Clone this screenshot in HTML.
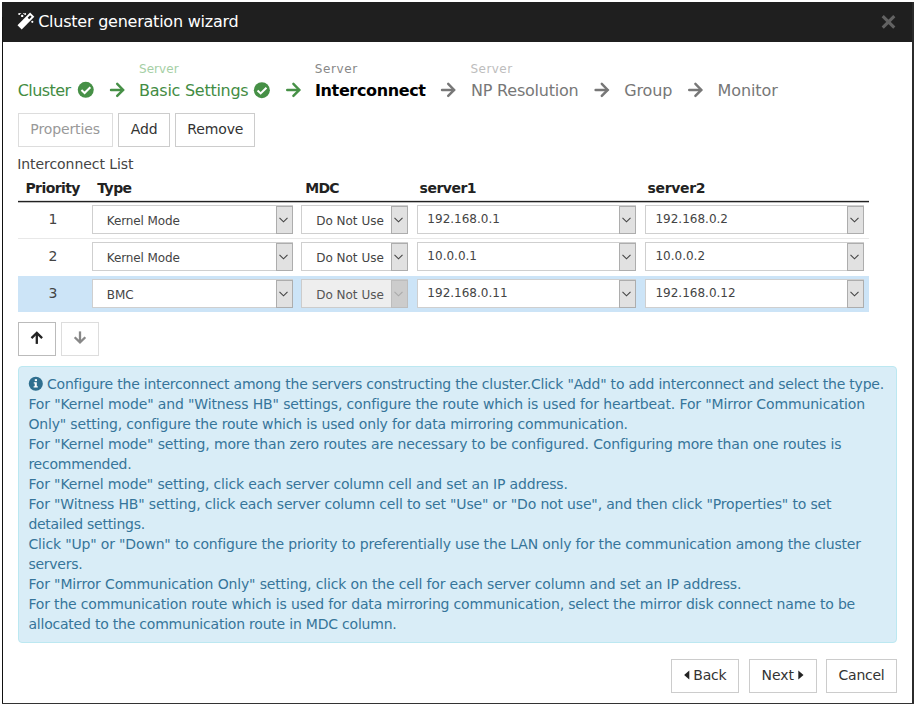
<!DOCTYPE html>
<html><head><meta charset="utf-8"><title>Cluster generation wizard</title>
<style>
*{box-sizing:border-box;margin:0;padding:0}
html,body{width:916px;height:706px;background:#fff;overflow:hidden}
body{position:relative;font-family:"DejaVu Sans","Liberation Sans",sans-serif;color:#333}
.a,.t{position:absolute;display:block}
.t{white-space:pre;line-height:1}
.btn{border:1px solid #ccc;background:#fff;height:34px}
.sel{border:1px solid #cfcfcf;background:#fff;height:29px}
.sel i{position:absolute;right:-1px;top:0;width:17px;height:28px;border:1px solid #adadad;background:#e1e1e1}
.sel.dis{background:#eee;border-color:#ccc}
.sel.dis i{background:#ccc;border-color:#bdbdbd}
svg{position:absolute;display:block;overflow:visible}
</style></head><body>
<div class="a" style="left:2px;top:2px;width:912px;height:40px;background:#1f1f1f"></div>
<div class="a" style="left:2px;top:17px;width:1px;height:687px;background:#111"></div>
<div class="a" style="left:912px;top:2px;width:2px;height:702px;background:#2b2b2b"></div>
<div class="a" style="left:2px;top:703px;width:912px;height:1px;background:#333"></div>
<div class="a" style="left:18px;top:366px;width:879px;height:277px;background:#d9edf7;border:1px solid #bce8f1;border-radius:4px"></div>
<div class="a" style="left:18px;top:276px;width:851px;height:36px;background:#cce4f7"></div>
<div class="a" style="left:18px;top:201px;width:851px;height:1px;background:#222"></div>
<div class="a" style="left:18px;top:202px;width:851px;height:1px;background:#bbb"></div>
<div class="a" style="left:18px;top:200px;width:851px;height:1px;background:#ddd"></div>
<div class="a" style="left:18px;top:238px;width:851px;height:1px;background:#e8e8e8"></div>
<div class="a btn" style="left:18px;top:113px;width:95px;border-color:#ddd"></div>
<div class="a btn" style="left:118px;top:113px;width:52px;border-color:#ccc"></div>
<div class="a btn" style="left:175px;top:113px;width:80px;border-color:#ccc"></div>
<div class="a btn" style="left:18px;top:322px;width:38px;border-color:#bbb"></div>
<div class="a btn" style="left:61px;top:322px;width:38px;border-color:#ddd"></div>
<div class="a btn" style="left:671px;top:659px;width:68px;border-color:#ccc"></div>
<div class="a btn" style="left:749px;top:659px;width:68px;border-color:#ccc"></div>
<div class="a btn" style="left:826px;top:659px;width:71px;border-color:#ccc"></div>
<div class="a sel" style="left:92px;top:205px;width:201px"><i></i><svg style="right:4px;top:10.8px" width="9" height="6" viewBox="0 0 9 6"><path d="M0.5 0.8 4.5 4.8 8.5 0.8" fill="none" stroke="#444" stroke-width="1.1"/></svg></div>
<div class="a sel" style="left:301px;top:205px;width:107px"><i></i><svg style="right:4px;top:10.8px" width="9" height="6" viewBox="0 0 9 6"><path d="M0.5 0.8 4.5 4.8 8.5 0.8" fill="none" stroke="#444" stroke-width="1.1"/></svg></div>
<div class="a sel" style="left:417px;top:205px;width:219px"><i></i><svg style="right:4px;top:10.8px" width="9" height="6" viewBox="0 0 9 6"><path d="M0.5 0.8 4.5 4.8 8.5 0.8" fill="none" stroke="#444" stroke-width="1.1"/></svg></div>
<div class="a sel" style="left:645px;top:205px;width:219px"><i></i><svg style="right:4px;top:10.8px" width="9" height="6" viewBox="0 0 9 6"><path d="M0.5 0.8 4.5 4.8 8.5 0.8" fill="none" stroke="#444" stroke-width="1.1"/></svg></div>
<div class="a sel" style="left:92px;top:242px;width:201px"><i></i><svg style="right:4px;top:10.8px" width="9" height="6" viewBox="0 0 9 6"><path d="M0.5 0.8 4.5 4.8 8.5 0.8" fill="none" stroke="#444" stroke-width="1.1"/></svg></div>
<div class="a sel" style="left:301px;top:242px;width:107px"><i></i><svg style="right:4px;top:10.8px" width="9" height="6" viewBox="0 0 9 6"><path d="M0.5 0.8 4.5 4.8 8.5 0.8" fill="none" stroke="#444" stroke-width="1.1"/></svg></div>
<div class="a sel" style="left:417px;top:242px;width:219px"><i></i><svg style="right:4px;top:10.8px" width="9" height="6" viewBox="0 0 9 6"><path d="M0.5 0.8 4.5 4.8 8.5 0.8" fill="none" stroke="#444" stroke-width="1.1"/></svg></div>
<div class="a sel" style="left:645px;top:242px;width:219px"><i></i><svg style="right:4px;top:10.8px" width="9" height="6" viewBox="0 0 9 6"><path d="M0.5 0.8 4.5 4.8 8.5 0.8" fill="none" stroke="#444" stroke-width="1.1"/></svg></div>
<div class="a sel" style="left:92px;top:279px;width:201px"><i></i><svg style="right:4px;top:10.8px" width="9" height="6" viewBox="0 0 9 6"><path d="M0.5 0.8 4.5 4.8 8.5 0.8" fill="none" stroke="#444" stroke-width="1.1"/></svg></div>
<div class="a sel dis" style="left:301px;top:279px;width:107px"><i></i><svg style="right:4px;top:10.8px" width="9" height="6" viewBox="0 0 9 6"><path d="M0.5 0.8 4.5 4.8 8.5 0.8" fill="none" stroke="#aaa" stroke-width="1.1"/></svg></div>
<div class="a sel" style="left:417px;top:279px;width:219px"><i></i><svg style="right:4px;top:10.8px" width="9" height="6" viewBox="0 0 9 6"><path d="M0.5 0.8 4.5 4.8 8.5 0.8" fill="none" stroke="#444" stroke-width="1.1"/></svg></div>
<div class="a sel" style="left:645px;top:279px;width:219px"><i></i><svg style="right:4px;top:10.8px" width="9" height="6" viewBox="0 0 9 6"><path d="M0.5 0.8 4.5 4.8 8.5 0.8" fill="none" stroke="#444" stroke-width="1.1"/></svg></div>
<span class="t" style="left:38.18px;top:13.66px;font-size:16px;color:#fff;letter-spacing:-0.235px">Cluster generation wizard</span>
<span class="t" style="left:17.78px;top:83.16px;font-size:16px;color:#438c43;letter-spacing:-0.579px">Cluster</span>
<span class="t" style="left:138.96px;top:62.95px;font-size:12px;color:#a5cfa5;letter-spacing:0.076px">Server</span>
<span class="t" style="left:139.08px;top:83.16px;font-size:16px;color:#438c43;letter-spacing:-0.266px">Basic Settings</span>
<span class="t" style="left:314.86px;top:62.95px;font-size:12px;color:#888;letter-spacing:0.596px">Server</span>
<span class="t" style="left:314.98px;top:83.16px;font-size:16px;color:#000;font-weight:700;letter-spacing:-0.360px">Interconnect</span>
<span class="t" style="left:470.56px;top:62.95px;font-size:12px;color:#bdbdbd;letter-spacing:0.436px">Server</span>
<span class="t" style="left:471.08px;top:83.16px;font-size:16px;color:#777;letter-spacing:-0.224px">NP Resolution</span>
<span class="t" style="left:624.18px;top:83.16px;font-size:16px;color:#777;letter-spacing:-0.150px">Group</span>
<span class="t" style="left:717.58px;top:83.16px;font-size:16px;color:#777;letter-spacing:-0.101px">Monitor</span>
<span class="t" style="left:30.32px;top:122.16px;font-size:14px;color:#999;letter-spacing:-0.110px">Properties</span>
<span class="t" style="left:130.72px;top:122.16px;font-size:14px;color:#333;letter-spacing:-0.065px">Add</span>
<span class="t" style="left:187.32px;top:122.16px;font-size:14px;color:#333;letter-spacing:-0.130px">Remove</span>
<span class="t" style="left:17.22px;top:157.06px;font-size:14px;color:#444;letter-spacing:-0.064px">Interconnect List</span>
<span class="t" style="left:25.42px;top:181.36px;font-size:14px;color:#222;font-weight:700;letter-spacing:-0.576px">Priority</span>
<span class="t" style="left:97.22px;top:181.36px;font-size:14px;color:#222;font-weight:700;letter-spacing:-0.550px">Type</span>
<span class="t" style="left:305.22px;top:181.36px;font-size:14px;color:#222;font-weight:700;letter-spacing:-0.774px">MDC</span>
<span class="t" style="left:419.62px;top:181.36px;font-size:14px;color:#222;font-weight:700;letter-spacing:-0.503px">server1</span>
<span class="t" style="left:647.52px;top:181.36px;font-size:14px;color:#222;font-weight:700;letter-spacing:-0.337px">server2</span>
<span class="t" style="left:47.02px;top:376.86px;font-size:14px;color:#36759a;letter-spacing:-0.213px">Configure the interconnect among the servers constructing the cluster.Click "Add" to add interconnect and select the type.</span>
<span class="t" style="left:28.42px;top:396.86px;font-size:14px;color:#36759a;letter-spacing:-0.135px">For "Kernel mode" and "Witness HB" settings, configure the route which is used for heartbeat. For "Mirror Communication</span>
<span class="t" style="left:28.42px;top:416.86px;font-size:14px;color:#36759a;letter-spacing:-0.165px">Only" setting, configure the route which is used only for data mirroring communication.</span>
<span class="t" style="left:28.42px;top:436.86px;font-size:14px;color:#36759a;letter-spacing:-0.138px">For "Kernel mode" setting, more than zero routes are necessary to be configured. Configuring more than one routes is</span>
<span class="t" style="left:28.42px;top:456.86px;font-size:14px;color:#36759a;letter-spacing:-0.242px">recommended.</span>
<span class="t" style="left:28.42px;top:476.86px;font-size:14px;color:#36759a;letter-spacing:-0.154px">For "Kernel mode" setting, click each server column cell and set an IP address.</span>
<span class="t" style="left:28.42px;top:496.86px;font-size:14px;color:#36759a;letter-spacing:-0.168px">For "Witness HB" setting, click each server column cell to set "Use" or "Do not use", and then click "Properties" to set</span>
<span class="t" style="left:28.42px;top:516.86px;font-size:14px;color:#36759a;letter-spacing:-0.288px">detailed settings.</span>
<span class="t" style="left:28.42px;top:536.86px;font-size:14px;color:#36759a;letter-spacing:-0.168px">Click "Up" or "Down" to configure the priority to preferentially use the LAN only for the communication among the cluster</span>
<span class="t" style="left:28.42px;top:556.86px;font-size:14px;color:#36759a;letter-spacing:-0.255px">servers.</span>
<span class="t" style="left:28.42px;top:576.86px;font-size:14px;color:#36759a;letter-spacing:-0.155px">For "Mirror Communication Only" setting, click on the cell for each server column and set an IP address.</span>
<span class="t" style="left:28.42px;top:596.86px;font-size:14px;color:#36759a;letter-spacing:-0.169px">For the communication route which is used for data mirroring communication, select the mirror disk connect name to be</span>
<span class="t" style="left:28.42px;top:616.86px;font-size:14px;color:#36759a;letter-spacing:-0.213px">allocated to the communication route in MDC column.</span>
<span class="t" style="left:693.32px;top:667.96px;font-size:14px;color:#333;letter-spacing:-0.240px">Back</span>
<span class="t" style="left:761.62px;top:667.96px;font-size:14px;color:#333;letter-spacing:-0.082px">Next</span>
<span class="t" style="left:838.62px;top:667.96px;font-size:14px;color:#333;letter-spacing:-0.272px">Cancel</span>
<span class="t" style="left:48.44px;top:212.36px;font-size:14px;color:#444">1</span>
<span class="t" style="left:106.76px;top:215.35px;font-size:12px;color:#444;letter-spacing:-0.108px">Kernel Mode</span>
<span class="t" style="left:316.16px;top:215.35px;font-size:12px;color:#444">Do Not Use</span>
<span class="t" style="left:427.36px;top:213.25px;font-size:12px;color:#444">192.168.0.1</span>
<span class="t" style="left:655.46px;top:213.25px;font-size:12px;color:#444">192.168.0.2</span>
<span class="t" style="left:48.44px;top:249.36px;font-size:14px;color:#444">2</span>
<span class="t" style="left:106.76px;top:252.35px;font-size:12px;color:#444;letter-spacing:-0.108px">Kernel Mode</span>
<span class="t" style="left:316.16px;top:252.35px;font-size:12px;color:#444">Do Not Use</span>
<span class="t" style="left:427.36px;top:250.25px;font-size:12px;color:#444">10.0.0.1</span>
<span class="t" style="left:655.46px;top:250.25px;font-size:12px;color:#444">10.0.0.2</span>
<span class="t" style="left:48.44px;top:286.36px;font-size:14px;color:#444">3</span>
<span class="t" style="left:106.76px;top:289.35px;font-size:12px;color:#444">BMC</span>
<span class="t" style="left:316.16px;top:289.35px;font-size:12px;color:#555">Do Not Use</span>
<span class="t" style="left:427.36px;top:287.25px;font-size:12px;color:#444">192.168.0.11</span>
<span class="t" style="left:655.46px;top:287.25px;font-size:12px;color:#444">192.168.0.12</span>
<svg style="left:0;top:0" width="916" height="706" viewBox="0 0 916 706">
<g transform="translate(25.9,21) rotate(-45)"><rect x="-8.9" y="-3" width="17.8" height="6" fill="#fff"/><rect x="3.6" y="-1.1" width="3.4" height="2.2" fill="#1f1f1f"/></g><g fill="#fff"><circle cx="19.2" cy="14.1" r="1"/><circle cx="22.2" cy="15.9" r="1.2"/><circle cx="25.1" cy="14.1" r="1"/><circle cx="32.3" cy="21.8" r="1.1"/><circle cx="20.7" cy="13.4" r=".5"/><circle cx="23.7" cy="13.4" r=".5"/></g>
<path d="M882.70 16.10L894.30 27.70M894.30 16.10L882.70 27.70" stroke="#626262" stroke-width="3.1" stroke-linecap="butt" fill="none"/>
<circle cx="85.75" cy="89.80" r="8" fill="#469046"/><path d="M81.45 90.10L84.55 93.00L90.35 87.30" fill="none" stroke="#fff" stroke-width="2.05" stroke-linecap="butt" stroke-linejoin="miter"/>
<circle cx="261.85" cy="90.20" r="8" fill="#469046"/><path d="M257.55 90.50L260.65 93.40L266.45 87.70" fill="none" stroke="#fff" stroke-width="2.05" stroke-linecap="butt" stroke-linejoin="miter"/>
<g fill="none" stroke="#469046" stroke-width="2.45" stroke-linecap="round" stroke-linejoin="miter"><path d="M111.02 89.90H122.74"/><path d="M117.20 83.87L123.11 89.90L117.20 95.93"/></g>
<g fill="none" stroke="#469046" stroke-width="2.45" stroke-linecap="round" stroke-linejoin="miter"><path d="M287.23 89.90H298.94"/><path d="M293.40 83.87L299.31 89.90L293.40 95.93"/></g>
<g fill="none" stroke="#777" stroke-width="2.45" stroke-linecap="round" stroke-linejoin="miter"><path d="M442.03 89.90H453.74"/><path d="M448.20 83.87L454.11 89.90L448.20 95.93"/></g>
<g fill="none" stroke="#777" stroke-width="2.45" stroke-linecap="round" stroke-linejoin="miter"><path d="M595.62 89.90H607.34"/><path d="M601.80 83.87L607.71 89.90L601.80 95.93"/></g>
<g fill="none" stroke="#777" stroke-width="2.45" stroke-linecap="round" stroke-linejoin="miter"><path d="M689.23 89.90H700.94"/><path d="M695.40 83.87L701.31 89.90L695.40 95.93"/></g>
<g fill="none" stroke="#222" stroke-width="2.3" stroke-linecap="butt" stroke-linejoin="miter"><path d="M36.80 343.90V333.24"/><path d="M31.49 338.09L36.80 332.89L42.11 338.09"/></g>
<g fill="none" stroke="#888" stroke-width="2.3" stroke-linecap="butt" stroke-linejoin="miter"><path d="M80.00 331.40V342.06"/><path d="M74.69 337.21L80.00 342.40L85.31 337.21"/></g>
<circle cx="35.80" cy="383.80" r="7.05" fill="#2f6f8f"/><rect x="34.80" y="379.20" width="2.2" height="1.9" fill="#fff"/><path d="M33.80 382.30h3v4h1v1.3h-4.2v-1.3h1.1v-2.7h-0.9z" fill="#fff"/>
<path d="M689.30 670.40L684.10 674.90L689.30 679.40Z" fill="#222"/>
<path d="M798.30 670.40L803.50 674.90L798.30 679.40Z" fill="#222"/>
</svg>
</body></html>
